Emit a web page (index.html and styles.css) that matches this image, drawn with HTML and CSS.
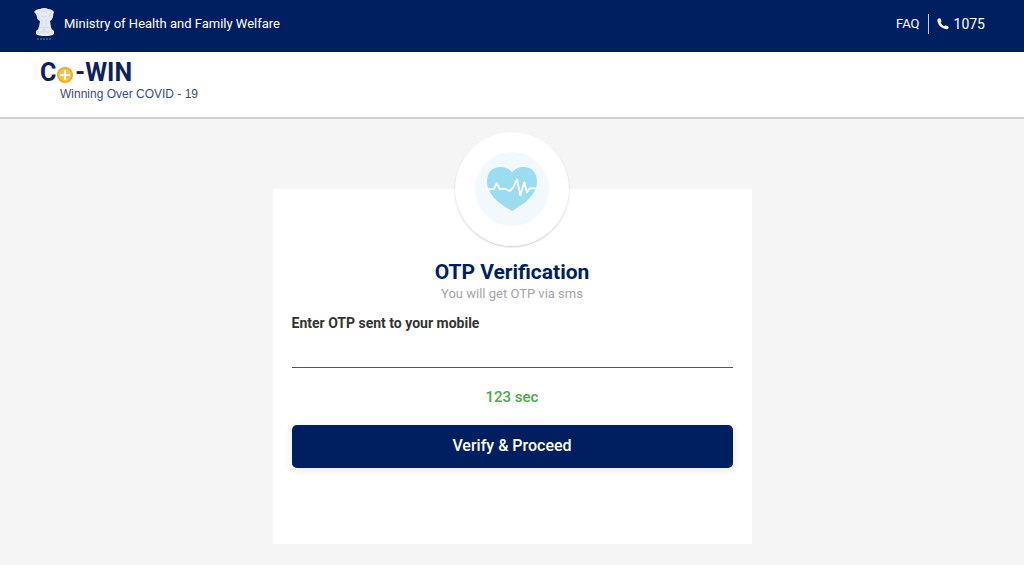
FILE: index.html
```html
<!DOCTYPE html>
<html lang="en">
<head>
<meta charset="utf-8">
<meta name="viewport" content="width=device-width, initial-scale=1">
<title>Co-WIN | OTP Verification</title>
<link rel="stylesheet" href="styles.css">
</head>
<body>
<header>
  <div class="topbar">
    <div class="ministry">
      <svg class="emblem" viewBox="0 0 20 32" aria-hidden="true">
        <path fill="#e6eaf6" d="M6 1Q8 0 10 0q3 0 4 1 4 0 6 3-1 2-1 5-1 3-3 4l1 6q0 2 3 4v3q-2 2-9 2t-9-2v-3q3-2 3-4l1-6q-3-1-3-4Q3 6 0 4q2-3 6-3z"/>
        <path fill="none" stroke="#c5cde2" stroke-width=".6" d="M7 4q3-2 6 0M7 8q3 2 6 0M4 6l1 4M16 6l-1 4M8 11v7M12 11v7M4 20q6-2 12 0M2 24h16"/>
        <circle cx="10" cy="22" r="1.3" fill="none" stroke="#c5cde2" stroke-width=".6"/>
        <path stroke="#6f80b0" stroke-dasharray="2 1" d="M3 31h15"/>
      </svg>
      <span>Ministry of Health and Family Welfare</span>
    </div>
    <nav class="links">
      <a class="faq" href="#faq">FAQ</a>
      <a class="phone" href="tel:1075">
        <svg class="phone-icon" viewBox="0 0 12 12" aria-hidden="true"><path fill="#fff" d="M.6 1.200Q1.500.2 2.900.4q.8.200 1 1l.5 1.800q.1.700-.5 1.200l-.3.400Q4.900 7 7.100 8.200l.5-.4q.5-.5 1.200-.3l2.100.8q.7.300.7 1 0 1-1 1.600-1.200.6-3.200-.1Q2.600 9.100.9 4.700 0 2.300.6 1.200z"/></svg>
        1075
      </a>
    </nav>
  </div>
  <div class="brandbar">
    <a class="brand" href="#home">
      <span class="name">C<svg class="plus" viewBox="0 0 16 16" role="img" aria-label="o"><circle cx="8" cy="8" r="8" fill="#e5a92b"/><circle cx="8" cy="8" r="6.500" fill="#f7c53c"/><path stroke="#fff" stroke-width="2" d="M8 3v10M3 8h10"/></svg>-WIN</span>
      <span class="tagline">Winning Over COVID - 19</span>
    </a>
  </div>
</header>
<main>
  <form class="card">
    <div class="badge">
      <svg viewBox="0 0 114 114" aria-hidden="true">
        <circle cx="57" cy="57" r="37" fill="#f2f9fc"/>
        <path fill="#9bdcf0" d="M57 40.500C60 36.500 64 35 68.500 35 77 35 82 41 82 49.500 82 63 69 72 57 79 45 72 32 63 32 49.500 32 41 37 35 45.500 35 50 35 54 36.500 57 40.500z"/>
        <path fill="none" stroke="#fff" stroke-width="1.800" stroke-linejoin="round" d="M31 57.300 38.700 57 41.700 51.300 44.700 57h6l4 2L58 56l4-9 3.300 16.300 4-13L72 60.300l2.700-4H83"/>
      </svg>
    </div>
    <h1>OTP Verification</h1>
    <p class="hint">You will get OTP via sms</p>
    <label for="otp">Enter OTP sent to your mobile</label>
    <input id="otp" type="text" inputmode="numeric" autocomplete="one-time-code">
    <p class="timer">123 sec</p>
    <button type="submit">Verify &amp; Proceed</button>
  </form>
</main>
</body>
</html>
```
FILE: styles.css
```css
* { box-sizing: border-box; }
body {
  margin: 0;
  min-height: 100vh;
  background: #f5f5f5;
  color: #333;
  font: 14px/20px Roboto, sans-serif;
}
a { color: inherit; text-decoration: none; }
svg { display: block; }
.topbar {
  display: flex;
  justify-content: space-between;
  align-items: center;
  min-height: 52px;
  padding: 0 39px 4px 34px;
  background: #001f60;
  color: #fff;
}
.ministry { display: flex; align-items: center; gap: 10px; font-size: 13px; }
.emblem { width: 20px; height: 32px; }
.links { display: flex; align-items: center; }
.faq { padding-right: 8px; border-right: 1px solid #c5cde0; font-size: 13px; }
.phone { display: flex; align-items: center; gap: 5px; padding-left: 8px; }
.phone-icon { width: 12px; height: 12px; }
.brandbar {
  padding: 8px 40px 14px;
  background: #fff;
  border-bottom: 2px solid #d0d0d0;
}
.brand { display: inline-flex; flex-direction: column; vertical-align: top; }
.name {
  display: flex;
  align-items: center;
  color: #0c2260;
  font-size: 25px;
  line-height: 26px;
  font-weight: 700;
}
.plus { width: 16px; height: 16px; margin: 3px 2px 0 1px; }
.tagline {
  padding-left: 20px;
  color: #3d4c7c;
  font: 12px/17px "Liberation Sans", Arial, sans-serif;
}
main { padding: 70px 16px 20px; }
.card {
  display: flex;
  flex-direction: column;
  width: 100%;
  max-width: 479px;
  margin: 0 auto;
  padding: 0 19px 76px;
  background: #fff;
}
.badge {
  align-self: center;
  width: 114px;
  margin: -57px 0 12px;
  border-radius: 50%;
  background: #fff;
  box-shadow: 0 1px 2px rgba(0, 0, 0, .2);
}
h1 {
  margin: 0;
  color: #001f60;
  font-size: 21px;
  line-height: 28px;
  font-weight: 700;
  text-align: center;
}
p { margin: 0; text-align: center; }
.hint { color: #a5a5a5; font-size: 13px; line-height: 15px; }
label { margin-top: 12px; font-weight: 700; }
input {
  width: 100%;
  height: 35px;
  padding: 0;
  border: 0;
  border-bottom: 1px solid #4b5272;
  background: transparent;
  font: inherit;
  outline: 0;
}
.timer { margin: 19px 0 18px; color: #4da750; font-size: 15px; font-weight: 500; }
button {
  min-height: 43px;
  padding: 0 0 2px;
  border: 0;
  border-radius: 5px;
  background: #001f60;
  color: #fff;
  font: 500 16px/20px Roboto, sans-serif;
  box-shadow: 0 2px 10px rgba(0, 0, 0, .1);
}
```
